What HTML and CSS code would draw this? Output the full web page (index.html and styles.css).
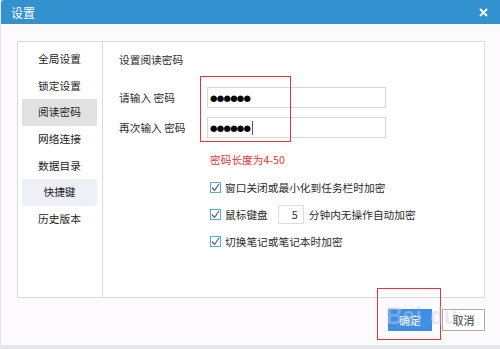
FILE: index.html
```html
<html>
  <head>
    <meta name="viewport" content="width=device-width,initial-scale=1">
    <title>设置</title>
    <link rel="stylesheet" href="styles.css">
  </head>
  <body>
    <div class="window">
      <div class="titlebar">
        <span class="title">设置</span>
        <svg class="close" width="9" height="9" viewBox="0 0 9 9">
          <path d="M1 1L8 8M8 1L1 8" stroke="#fff" stroke-width="1.8"/>
        </svg>
      </div>

      <div class="frame">
        <div class="panel">
          <ul class="nav">
            <li>全局设置</li>
            <li>锁定设置</li>
            <li class="active">阅读密码</li>
            <li>网络连接</li>
            <li>数据目录</li>
            <li class="hover">快捷键</li>
            <li>历史版本</li>
          </ul>

          <div class="content">
            <div class="heading">设置阅读密码</div>
            <div class="field">
              <label>请输入 密码</label>
              <div class="input"><span class="dots">●●●●●●</span></div>
            </div>
            <div class="field">
              <label>再次输入 密码</label>
              <div class="input"><span class="dots">●●●●●●</span><span class="caret"></span></div>
            </div>
            <p class="hint">密码长度为4-50</p>
            <div class="options">
              <div class="option">
                <span class="check"><svg width="9" height="9" viewBox="0 0 9 9"><path d="M1 4.5L3.5 7.5L8 1" fill="none" stroke="#666" stroke-width="1.3"/></svg></span>
                窗口关闭或最小化到任务栏时加密
              </div>
              <div class="option">
                <span class="check"><svg width="9" height="9" viewBox="0 0 9 9"><path d="M1 4.5L3.5 7.5L8 1" fill="none" stroke="#666" stroke-width="1.3"/></svg></span>
                鼠标键盘
                <span class="num">5</span>
                分钟内无操作自动加密
              </div>
              <div class="option">
                <span class="check"><svg width="9" height="9" viewBox="0 0 9 9"><path d="M1 4.5L3.5 7.5L8 1" fill="none" stroke="#666" stroke-width="1.3"/></svg></span>
                切换笔记或笔记本时加密
              </div>
            </div>
          </div>
        </div>

        <div class="actions">
          <button class="btn primary">确定</button>
          <button class="btn">取消</button>
        </div>
      </div>

      <!-- red annotation boxes -->
      <div class="mark mark-fields"></div>
      <div class="mark mark-button"></div>
      <div class="watermark">Bai<span>du</span></div>
    </div>
  </body>
</html>
```

FILE: styles.css
```css
:root {
    --blue: #3391d0;
    --frame: #fcfafd;
    --line: #d9dbe1;
    --text: #2b2b2b;
    --red: #e8353b;
}

html, body {
    margin: 0;
    padding: 0;
    width: 500px;
    height: 349px;
    overflow: hidden;
}

body {
    background-color: #e6e7ea;
    font-family: "Noto Sans CJK SC", "Noto Sans", sans-serif;
    font-size: 10.7px;
    color: var(--text);
}

.window {
    position: relative;
    margin-left: 1px;
    width: 512px;
    height: 345px;
    background-color: var(--frame);
    border-radius: 3px 3px 0 0;
    overflow: hidden;
}

.titlebar {
    height: 24px;
    background-color: var(--blue);
    display: flex;
    align-items: center;
    padding: 0 0 0 10px;
    box-sizing: border-box;
}

.title {
    color: #fff;
    font-size: 12px;
    width: 468px;
}

.close {
    margin-top: 1px;
}

.frame {
    padding: 17px 0 0 16px;
}

.panel {
    display: flex;
    width: 468px;
    height: 257px;
    box-sizing: border-box;
    border: 1px solid var(--line);
    background-color: #fff;
}

.nav {
    list-style: none;
    margin: 0;
    width: 85px;
    box-sizing: border-box;
    padding: 4px 5px 0 4px;
    border-right: 1px solid var(--line);
}

.nav li {
    height: 26.7px;
    line-height: 26.7px;
    text-align: center;
    color: #222;
}

.nav li.active {
    background-color: #e1e1e1;
}

.nav li.hover {
    background-color: #eef0f8;
}

.content {
    flex: 1;
    padding: 9px 0 0 16px;
}

.heading {
    line-height: 18px;
    margin-bottom: 18px;
}

.field {
    display: flex;
    align-items: center;
    height: 21px;
    margin-bottom: 9px;
}

.field label {
    width: 88px;
}

.input {
    width: 179px;
    height: 21px;
    box-sizing: border-box;
    border: 1px solid #d5d7dc;
    background-color: #fff;
    display: flex;
    align-items: center;
    padding-left: 2px;
}

.dots {
    font-family: "DejaVu Sans", sans-serif;
    font-size: 8.5px;
    letter-spacing: -0.7px;
    color: #000;
}

.caret {
    width: 1px;
    height: 14px;
    margin-left: 2px;
    background-color: #555;
}

.hint {
    margin: 14px 0 0 91px;
    line-height: 16px;
    color: var(--red);
}

.options {
    margin: 9px 0 0 91px;
    display: flex;
    flex-direction: column;
    gap: 7px;
}

.option {
    display: flex;
    align-items: center;
    height: 20px;
    gap: 4px;
}

.check {
    width: 11px;
    height: 11px;
    box-sizing: border-box;
    border: 1px solid #5ea7e2;
    background-color: #fff;
    display: flex;
    align-items: center;
    justify-content: center;
}

.num {
    width: 26px;
    height: 19px;
    box-sizing: border-box;
    border: 1px solid #dcdde2;
    text-align: right;
    padding-right: 5px;
    line-height: 17px;
    margin: 0 1px 0 6px;
}

.actions {
    display: flex;
    justify-content: flex-end;
    gap: 10px;
    width: 468px;
    margin-top: 11px;
}

.btn {
    width: 43px;
    height: 22px;
    padding: 0;
    font-family: inherit;
    font-size: 11px;
    color: #333;
    background-color: #fff;
    border: 1px solid #a9abb0;
}

.btn.primary {
    width: 44px;
    background-color: #3f8fe6;
    border-color: #3f8fe6;
    color: #fff;
}

.mark {
    position: absolute;
    border: 1.5px solid var(--red);
    box-sizing: border-box;
}

.mark-fields {
    left: 199px;
    top: 76px;
    width: 91px;
    height: 66px;
}

.mark-button {
    left: 376px;
    top: 288px;
    width: 64px;
    height: 52px;
}

.watermark {
    position: absolute;
    left: 385px;
    top: 303px;
    font-family: "Liberation Sans", sans-serif;
    font-weight: bold;
    font-size: 23px;
    color: rgba(190, 205, 225, 0.45);
}

.watermark span {
    margin-left: 8px;
}
```
